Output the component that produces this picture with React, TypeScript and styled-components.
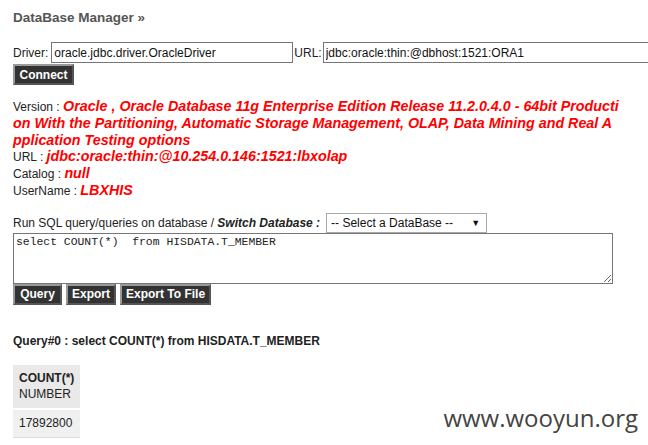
import React from "react";
import styled, { createGlobalStyle } from "styled-components";

const Global = createGlobalStyle`
  html, body { margin: 0; padding: 0; background: #fff; }
  body { font-family: Arial, "Liberation Sans", sans-serif; font-size: 12px; color: #222; }
`;

const Page = styled.div`
  position: relative;
  width: 648px;
  height: 445px;
  overflow: hidden;
  padding: 8px 13px 0 13px;
  box-sizing: border-box;
`;

const Title = styled.h2`
  margin: 0 0 14px 0;
  font-size: 13.5px;
  font-weight: bold;
  color: #555;
  line-height: 20px;
`;

const FormRow = styled.div`
  display: flex;
  align-items: center;
  white-space: nowrap;
  height: 21px;
`;

const Label = styled.span<{ $tight?: boolean }>`
  margin-right: ${(p) => (p.$tight ? 1 : 3)}px;
  margin-left: ${(p) => (p.$tight ? 1 : 0)}px;
`;

const TextInput = styled.input<{ $w: number }>`
  width: ${(p) => p.$w}px;
  height: 21px;
  box-sizing: border-box;
  border: 1px solid #767676;
  padding: 0 2px;
  font-family: Arial, "Liberation Sans", sans-serif;
  font-size: 12px;
  color: #111;
  margin: 0;
  flex-shrink: 0;
`;

const Button = styled.button<{ $minW?: number }>`
  background: #333;
  color: #fff;
  font-family: Arial, "Liberation Sans", sans-serif;
  font-weight: bold;
  font-size: 12px;
  border: 2px solid #8a8a8a;
  border-color: #9a9a9a #555 #555 #9a9a9a;
  height: 21px;
  min-width: ${(p) => p.$minW ?? 0}px;
  padding: 0 4px;
  margin: 0;
  cursor: pointer;
`;

const ButtonRow = styled.div<{ $mt?: number }>`
  display: flex;
  gap: 4px;
  margin-top: ${(p) => p.$mt ?? 0}px;
`;

const Info = styled.div`
  margin-top: 14px;
  width: 606px;
  line-height: 16.8px;
`;

const InfoLine = styled.div`
  word-break: break-all;
  line-height: 16.8px;
`;

const Red = styled.span`
  color: #f00;
  font-weight: bold;
  font-style: italic;
  font-size: 14.3px;
  line-height: 14px;
`;

const SqlLabelRow = styled.div`
  display: flex;
  align-items: center;
  margin-top: 13px;
  height: 20px;
  white-space: nowrap;
`;

const Em = styled.b`
  font-style: italic;
`;

const Select = styled.div`
  display: flex;
  align-items: center;
  justify-content: space-between;
  width: 161px;
  height: 20px;
  box-sizing: border-box;
  border: 1px solid #a9a9a9;
  padding: 0 6px 0 4px;
  margin-left: 6px;
  font-size: 12px;
  color: #111;
`;

const Arrow = styled.span`
  font-size: 9px;
`;

const TextArea = styled.textarea`
  display: block;
  width: 600px;
  height: 51px;
  box-sizing: border-box;
  border: 1px solid #767676;
  margin: 0;
  padding: 2px 2px;
  font-family: "Courier New", "Liberation Mono", monospace;
  font-size: 11.4px;
  color: #222;
  resize: both;
`;

const QueryTitle = styled.div`
  font-weight: bold;
  margin-top: 29px;
  color: #222;
`;

const ResultTable = styled.table`
  border-collapse: collapse;
  margin-top: 17px;
`;

const Th = styled.th`
  background: #e9e9e9;
  text-align: left;
  padding: 5px 6px 6px 6px;
  line-height: 16px;
  border-bottom: 2px solid #fff;
  font-size: 12px;
  color: #222;
`;

const Normal = styled.span`
  font-weight: normal;
`;

const Td = styled.td`
  background: #f0f0f0;
  padding: 5px 6px 6px 6px;
  line-height: 16px;
  border-bottom: 1px solid #ddd;
  color: #222;
`;

const Watermark = styled.div`
  position: absolute;
  right: 10px;
  bottom: 13px;
  font-family: "Open Sans", "Noto Sans", sans-serif;
  font-size: 24px;
  line-height: 28px;
  color: #444;
`;

export default function App() {
  return (
    <>
      <Global />
      <Page>
        <Title>DataBase Manager »</Title>
        <FormRow>
          <Label>Driver:</Label>
          <TextInput $w={242} defaultValue="oracle.jdbc.driver.OracleDriver" />
          <Label $tight>URL:</Label>
          <TextInput $w={340} defaultValue="jdbc:oracle:thin:@dbhost:1521:ORA1" />
        </FormRow>
        <ButtonRow $mt={1}>
          <Button $minW={61}>Connect</Button>
        </ButtonRow>
        <Info>
          <InfoLine>
            Version : <Red>Oracle , Oracle Database 11g Enterprise Edition Release 11.2.0.4.0 - 64bit Production With the Partitioning, Automatic Storage Management, OLAP, Data Mining and Real Application Testing options</Red>
          </InfoLine>
          <InfoLine>
            URL : <Red>jdbc:oracle:thin:@10.254.0.146:1521:lbxolap</Red>
          </InfoLine>
          <InfoLine>
            Catalog : <Red>null</Red>
          </InfoLine>
          <InfoLine>
            UserName : <Red>LBXHIS</Red>
          </InfoLine>
        </Info>
        <SqlLabelRow>
          Run SQL query/queries on database /&nbsp;<Em>Switch Database :</Em>
          <Select>
            <span>-- Select a DataBase --</span>
            <Arrow>▼</Arrow>
          </Select>
        </SqlLabelRow>
        <TextArea defaultValue="select COUNT(*)  from HISDATA.T_MEMBER" />
        <ButtonRow>
          <Button $minW={49}>Query</Button>
          <Button>Export</Button>
          <Button>Export To File</Button>
        </ButtonRow>
        <QueryTitle>Query#0 : select COUNT(*) from HISDATA.T_MEMBER</QueryTitle>
        <ResultTable>
          <thead>
            <tr>
              <Th>
                COUNT(*)
                <br />
                <Normal>NUMBER</Normal>
              </Th>
            </tr>
          </thead>
          <tbody>
            <tr>
              <Td>17892800</Td>
            </tr>
          </tbody>
        </ResultTable>
        <Watermark>www.wooyun.org</Watermark>
      </Page>
    </>
  );
}
